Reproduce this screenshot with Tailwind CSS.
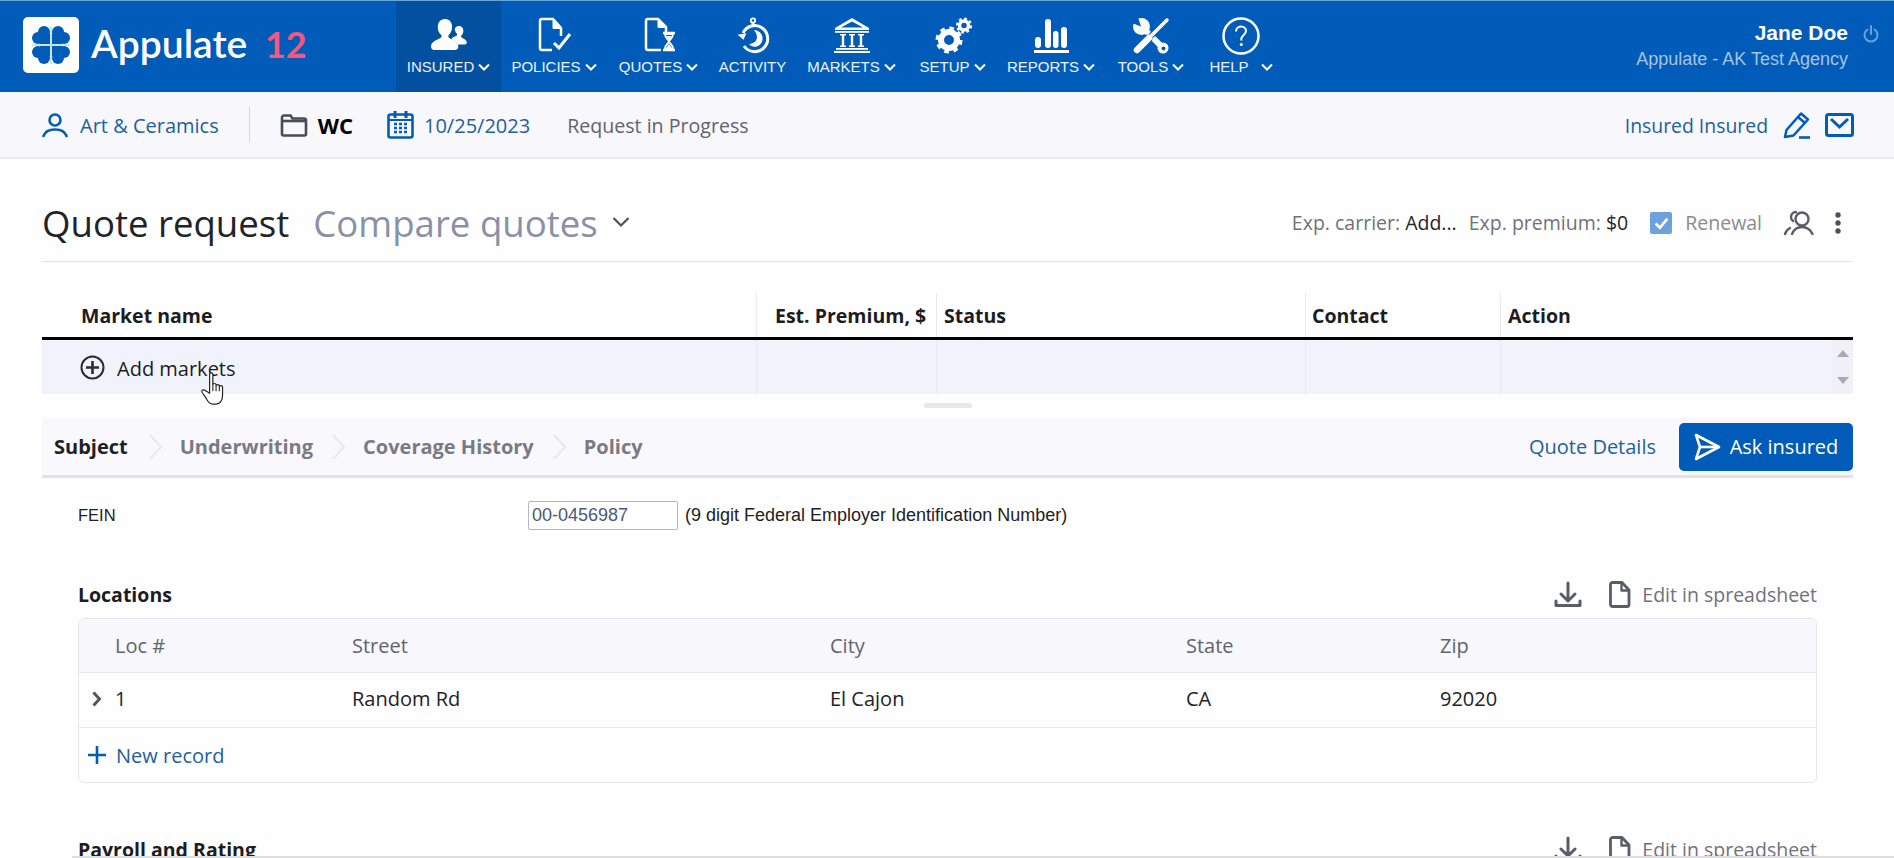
<!DOCTYPE html>
<html><head><meta charset="utf-8"><script src="https://cdn.jsdelivr.net/npm/@tailwindcss/browser@4"></script></head>
<body class="bg-[#fefefe]">
<div class="relative w-[1894px] h-[858px] overflow-hidden flex flex-col font-['Open_Sans',sans-serif] text-[#1f1f24]">

<header class="h-[92px] shrink-0 bg-[#015cb9] border-t border-[#6ba6d8] flex text-white font-['Liberation_Sans',sans-serif]">
  <div class="w-[396px] shrink-0 flex items-center pl-[23px] pb-[3px]">
    <div class="w-[56px] h-[56px] bg-white rounded-[5px] flex items-center justify-center">
      <svg width="40" height="40" viewBox="0 0 40 40" fill="#015cb9"><path d="M19.500 1h1v38h-1zM1 19.500h38v1H1z" fill="#9cc6ec"/><g><circle cx="13" cy="7" r="6"/><circle cx="7" cy="13" r="6"/><rect x="9" y="9" width="10" height="10"/></g><g transform="translate(40 0) scale(-1 1)"><circle cx="13" cy="7" r="6"/><circle cx="7" cy="13" r="6"/><rect x="9" y="9" width="10" height="10"/></g><g transform="translate(0 40) scale(1 -1)"><circle cx="13" cy="7" r="6"/><circle cx="7" cy="13" r="6"/><rect x="9" y="9" width="10" height="10"/></g><g transform="translate(40 40) scale(-1 -1)"><circle cx="13" cy="7" r="6"/><circle cx="7" cy="13" r="6"/><rect x="9" y="9" width="10" height="10"/></g></svg>
    </div>
    <div class="ml-[12px] text-[39px] leading-none font-['Lato',sans-serif] font-semibold -mt-[4px] whitespace-nowrap">Appulate <span class="ml-[8px] text-[36px] text-[#f4577f] font-bold">12</span></div>
  </div>
  <nav class="flex text-[15px] leading-none">
    <div class="w-[105px] bg-[#02509f] flex flex-col items-center pt-[16px]">
      <svg width="38" height="38" viewBox="0 0 38 38" fill="#fff"><path d="M15 2c5 0 7.500 4 7 9-.3 3-1.500 5.500-3.300 7-.8 1.300-.3 2.500 1 3.300 3 1.500 7.300 3 8.300 6.500.8 3-.2 5.200-3 5.200H5c-3 0-4.500-2-3.800-5 1-3.600 6-5.300 9-6.800 1.300-.8 1.800-2 1-3.200C9.400 16.500 8 14 7.800 11 7.400 6 10 2 15 2z"/><path d="M29 9c3 0 4.700 2.500 4.300 5.500-.2 1.800-1 3.300-2 4.300-.5.800-.2 1.500.6 2 1.800 1 4 1.700 4.700 3.700.5 1.800-.2 3-1.800 3H28c-1-2-3-3.500-5-4.500-1.500-.8-1.500-1.800-.2-2.500 1-.5 3-1.200 3.800-1.900.6-.5.700-1.100.3-1.800-1-1-1.800-2.500-2-4.300C24.500 11.500 26 9 29 9z"/></svg>
      <div class="mt-[4px] flex items-center gap-[4px] text-[#eaf2fb]">INSURED<svg width="12" height="8" viewBox="0 0 12 8" fill="none" stroke="#fff" stroke-width="2"><path d="M1 1.500l5 5 5-5"/></svg></div>
    </div>
    <div class="w-[106px] flex flex-col items-center pt-[16px]">
      <svg width="38" height="38" viewBox="0 0 38 38" fill="none" stroke="#fff" stroke-width="2.500"><path d="M17 33H7a2 2 0 0 1-2-2V4a2 2 0 0 1 2-2h11l8 9v8"/><path d="M18 2.500v9h8" fill="#fff" stroke-width="1"/><path d="M19 26l5 5 11-14" stroke-width="3"/></svg>
      <div class="mt-[4px] flex items-center gap-[4px] text-[#eaf2fb]">POLICIES<svg width="12" height="8" viewBox="0 0 12 8" fill="none" stroke="#fff" stroke-width="2"><path d="M1 1.500l5 5 5-5"/></svg></div>
    </div>
    <div class="w-[103px] flex flex-col items-center pt-[16px]">
      <svg width="38" height="38" viewBox="0 0 38 38" fill="none" stroke="#fff" stroke-width="2.500"><path d="M21 33H8a2 2 0 0 1-2-2V4a2 2 0 0 1 2-2h10l8 8v5"/><path d="M18 2.500v8h8" fill="#fff" stroke-width="1"/><path d="M23 16h12M23 33h12" stroke-width="2.500"/><path d="M25 17c0 5 3.500 5 4 7.500-.5 2.500-4 2.500-4 7.500h8c0-5-3.500-5-4-7.500.5-2.500 4-2.500 4-7.500z" stroke-width="1.800"/><path d="M26.500 19h5l-2.500 4zM26 31l3-4 3 4z" fill="#fff" stroke="none"/></svg>
      <div class="mt-[4px] flex items-center gap-[4px] text-[#eaf2fb]">QUOTES<svg width="12" height="8" viewBox="0 0 12 8" fill="none" stroke="#fff" stroke-width="2"><path d="M1 1.500l5 5 5-5"/></svg></div>
    </div>
    <div class="w-[85px] flex flex-col items-center pt-[16px]">
      <svg width="38" height="38" viewBox="0 0 38 38" fill="none" stroke="#fff" stroke-width="2.500"><circle cx="19" cy="3.500" r="2.200" stroke-width="1.800"/><path d="M19 6v4"/><path d="M9 16a13 13 0 1 1 1 13" stroke-width="3"/><path d="M4 17h9l-4 6z" fill="#fff" stroke="none" transform="rotate(-10 8 20)"/><path d="M20 13a8.500 8.500 0 0 1 3 16.500c-4 1-7-1-8-2.500 3 0 8-2 8-7 0-3-1.500-5-3-7z" fill="#fff" stroke="none"/></svg>
      <div class="mt-[4px] text-[#eaf2fb]">ACTIVITY</div>
    </div>
    <div class="w-[113px] flex flex-col items-center pt-[16px]">
      <svg width="38" height="38" viewBox="0 0 38 38" fill="#fff"><path d="M19 1L36 11v2H2v-2zM19 4.500L8 10.500h22z" fill-rule="evenodd"/><rect x="2" y="14" width="34" height="1.800"/><path d="M7 17h6v1.500h-1.800v10H13V30H7v-1.500h1.800v-10H7zM16 17h6v1.500h-1.800v10H22V30h-6v-1.500h1.800v-10H16zM25 17h6v1.500h-1.800v10H31V30h-6v-1.500h1.800v-10H25z"/><rect x="3" y="31" width="32" height="1.800"/><rect x="1" y="34" width="36" height="2"/></svg>
      <div class="mt-[4px] flex items-center gap-[4px] text-[#eaf2fb]">MARKETS<svg width="12" height="8" viewBox="0 0 12 8" fill="none" stroke="#fff" stroke-width="2"><path d="M1 1.500l5 5 5-5"/></svg></div>
    </div>
    <div class="w-[89px] flex flex-col items-center pt-[16px]">
      <svg width="38" height="38" viewBox="0 0 38 38" fill="none" stroke="#fff"><circle cx="15" cy="23" r="8" stroke-width="6"/><circle cx="15" cy="23" r="11.500" stroke-width="4" stroke-dasharray="4.500 4.530"/><circle cx="30" cy="8.500" r="4.500" stroke-width="3.500"/><circle cx="30" cy="8.500" r="6.800" stroke-width="2.500" stroke-dasharray="2.700 2.640"/></svg>
      <div class="mt-[4px] flex items-center gap-[4px] text-[#eaf2fb]">SETUP<svg width="12" height="8" viewBox="0 0 12 8" fill="none" stroke="#fff" stroke-width="2"><path d="M1 1.500l5 5 5-5"/></svg></div>
    </div>
    <div class="w-[108px] flex flex-col items-center pt-[16px]">
      <svg width="38" height="38" viewBox="0 0 38 38" fill="#fff"><rect x="2" y="33" width="35" height="3"/><rect x="3" y="20" width="6" height="11" rx="3"/><rect x="13" y="2" width="6" height="29" rx="3"/><rect x="21" y="14" width="5.500" height="17" rx="2.700"/><rect x="29" y="10" width="6" height="21" rx="3"/></svg>
      <div class="mt-[4px] flex items-center gap-[4px] text-[#eaf2fb]">REPORTS<svg width="12" height="8" viewBox="0 0 12 8" fill="none" stroke="#fff" stroke-width="2"><path d="M1 1.500l5 5 5-5"/></svg></div>
    </div>
    <div class="w-[92px] flex flex-col items-center pt-[16px]">
      <svg width="38" height="38" viewBox="0 0 38 38" fill="none" stroke="#fff" stroke-linecap="round"><circle cx="9.500" cy="9.500" r="8.500" fill="#fff" stroke="none"/><path d="M9 9.500L0 6l6-6z" fill="#015cb9" stroke="none"/><path d="M12 12l18 18" stroke-width="6"/><circle cx="31" cy="31" r="5.500" fill="#fff" stroke="none"/><circle cx="31.500" cy="31.500" r="2" fill="#015cb9" stroke="none"/><path d="M35 3L20 18" stroke="#015cb9" stroke-width="6"/><path d="M35 3L19 19" stroke-width="3.400"/><path d="M16 22L5 33" stroke="#015cb9" stroke-width="9"/><path d="M17 21L5 33" stroke-width="6.500"/></svg>
      <div class="mt-[4px] flex items-center gap-[4px] text-[#eaf2fb]">TOOLS<svg width="12" height="8" viewBox="0 0 12 8" fill="none" stroke="#fff" stroke-width="2"><path d="M1 1.500l5 5 5-5"/></svg></div>
    </div>
    <div class="w-[88px] flex flex-col items-center pt-[16px]">
      <svg width="38" height="38" viewBox="0 0 38 38" fill="none" stroke="#fff" stroke-width="2.500"><circle cx="19" cy="19" r="17.500"/><path d="M14 14.500c0-3 2.200-5 5-5s5 2 5 4.500c0 3.800-4.700 4-4.700 8v1.500" stroke-width="2"/><circle cx="19.300" cy="27.500" r="1.500" fill="#fff" stroke="none"/></svg>
      <div class="mt-[4px] flex items-center gap-[12px] text-[#eaf2fb]">HELP<svg width="12" height="8" viewBox="0 0 12 8" fill="none" stroke="#fff" stroke-width="2"><path d="M1 1.500l5 5 5-5"/></svg></div>
    </div>
  </nav>
  <div class="ml-auto flex pt-[21px] pr-[15px]">
    <div class="flex flex-col items-end">
      <div class="text-[21px] font-bold leading-[22px]">Jane Doe</div>
      <div class="text-[18px] leading-[20px] mt-[5px] text-[#a6c3e3]">Appulate - AK Test Agency</div>
    </div>
    <svg class="ml-[15px] mt-[3px]" width="16" height="18" viewBox="0 0 16 18" fill="none" stroke="#6ba2dc" stroke-width="2" stroke-linecap="round"><path d="M8 1v8M4.500 4.500a6.500 6.500 0 1 0 7 0"/></svg>
  </div>
</header>

<div class="h-[67px] shrink-0 bg-[#f7f7fc] border-b-2 border-[#ebebf1] flex items-center pl-[42px] pr-[40px] text-[20px]">
  <svg width="26" height="26" viewBox="0 0 26 26" fill="none" stroke="#015cb9" stroke-width="2.600" stroke-linecap="round"><circle cx="13" cy="8" r="5.500"/><path d="M1.500 24c1.500-4.500 6-6.500 11.500-6.500s10 2 11.500 6.500"/></svg>
  <span class="ml-[12px] pt-[2px] text-[#22609f]">Art &amp; Ceramics</span>
  <div class="w-px h-[36px] bg-[#d8d8de] ml-[30px]"></div>
  <svg class="ml-[30px]" width="28" height="24" viewBox="0 0 28 24" fill="none"><path d="M2 21V4.500A2 2 0 0 1 4 2.500h6.500l2 3H24a2 2 0 0 1 2 2V21a1.500 1.500 0 0 1-1.500 1.500h-21A1.500 1.500 0 0 1 2 21z" stroke="#4b4b55" stroke-width="2.600"/><path d="M2 8h24" stroke="#4b4b55" stroke-width="2.600"/></svg>
  <span class="ml-[10px] pt-[2px] text-[22px] font-bold text-black">WC</span>
  <svg class="ml-[34px]" width="27" height="29" viewBox="0 0 27 29" fill="none" stroke="#015cb9"><rect x="1.500" y="4.500" width="24" height="23" rx="2" stroke-width="2.600"/><path d="M8 1v7M19 1v7" stroke-width="3"/><path d="M2 10h23" stroke-width="2"/><path d="M7 14h3M12 14h3M17 14h3M7 18h3M12 18h3M17 18h3M7 22h3M12 22h3M17 22h3" stroke-width="2.500"/></svg>
  <span class="ml-[10px] pt-[2px] text-[#22609f]">10/25/2023</span>
  <span class="ml-[37px] pt-[2px] text-[19.600px] text-[#63636e]">Request in Progress</span>
  <span class="ml-auto pt-[2px] text-[19.400px] text-[#22609f]">Insured Insured</span>
  <svg class="ml-[14px]" width="30" height="30" viewBox="0 0 30 30" fill="none" stroke="#015cb9" stroke-width="2.500" stroke-linejoin="round"><path d="M3 27l1.500-7L19 3.500l7 6L11.500 25.500z"/><path d="M16 7l7 6"/><path d="M17 27.500h11" stroke-width="2.600"/></svg>
  <svg class="ml-[13px]" width="29" height="24" viewBox="0 0 29 24" fill="none" stroke="#015cb9" stroke-width="3"><rect x="1.500" y="1.500" width="26" height="21" rx="2"/><path d="M6 6l8.500 8L23 6"/></svg>
</div>

<main class="flex-1 px-[42px] pr-[41px] flex flex-col min-h-0">
  <div class="h-[103px] shrink-0 border-b border-[#e3e3e8] flex items-center pt-[26px]">
    <div class="text-[36.600px] leading-none text-[#222228]">Quote request</div>
    <div class="ml-[24px] text-[36.600px] leading-none text-[#8a90a8]">Compare quotes</div>
    <svg class="ml-[14px] -mt-[2px]" width="18" height="12" viewBox="0 0 18 12" fill="none" stroke="#50505a" stroke-width="2.200"><path d="M1.500 2l7.500 7.500L16.500 2"/></svg>
    <div class="ml-auto flex items-center text-[19.500px] text-[#71717c] pr-[12px]">
      <span>Exp. carrier: <span class="text-[#24242a]">Add...</span></span>
      <span class="ml-[12px]">Exp. premium: <span class="text-[#24242a]">$0</span></span>
      <span class="ml-[22px] w-[22px] h-[22px] rounded-[2px] bg-[#6da1dd] flex items-center justify-center"><svg width="15" height="13" viewBox="0 0 14 12" fill="none" stroke="#fff" stroke-width="2.500"><path d="M1.500 6l4 4 7-8.500"/></svg></span>
      <span class="ml-[13px] text-[#8b8b95]">Renewal</span>
      <svg class="ml-[20px]" width="36" height="26" viewBox="0 0 34 26" fill="none" stroke="#5c5c68" stroke-width="2.400" stroke-linecap="round"><circle cx="19" cy="9" r="6.500"/><path d="M9 24c2-5 6-7 10-7s8 2 10.500 7"/><path d="M13 2c-3 0-5 2.500-5 5 0 1.500.5 3 2 4M2 24c1-3 3-5 5-6"/></svg>
      <svg class="ml-[17px]" width="6" height="22" viewBox="0 0 6 22" fill="#50505a"><circle cx="3" cy="3" r="2.700"/><circle cx="3" cy="11" r="2.700"/><circle cx="3" cy="19" r="2.700"/></svg>
    </div>
  </div>

  <div class="mt-[31px] h-[47px] shrink-0 grid grid-cols-[714px_180px_369px_195px_1fr] border-b-[3px] border-black font-bold text-[19.500px] leading-none">
    <div class="pl-[39px] pt-[13px] text-[#1c1c22]">Market name</div>
    <div class="border-l border-[#e8e8ee] pl-[18px] pt-[13px] text-[#1c1c22] whitespace-nowrap">Est. Premium, $</div>
    <div class="border-l border-[#e8e8ee] pl-[7px] pt-[13px] text-[#1c1c22]">Status</div>
    <div class="border-l border-[#e8e8ee] pl-[6px] pt-[13px] text-[#1c1c22]">Contact</div>
    <div class="border-l border-[#e8e8ee] pl-[7px] pt-[13px] text-[#1c1c22]">Action</div>
  </div>
  <div class="relative h-[54px] shrink-0 bg-[#f1f3fc] grid grid-cols-[714px_180px_369px_195px_1fr]">
    <div class="pl-[38px] flex items-center text-[20px] text-[#1c1c22]">
      <svg width="25" height="25" viewBox="0 0 25 25" fill="none" stroke="#2c2c34"><circle cx="12.500" cy="12.500" r="11" stroke-width="2"/><path d="M12.500 6v13M6 12.500h13" stroke-width="2.600"/></svg>
      <span class="ml-[12px] pt-[3px]">Add markets</span>
    </div>
    <div class="border-l border-[#e6e7f1]"></div>
    <div class="border-l border-[#e6e7f1]"></div>
    <div class="border-l border-[#e6e7f1]"></div>
    <div class="border-l border-[#e6e7f1] flex justify-end">
      <div class="w-[21px] bg-[#f0f0f6] flex flex-col items-center justify-between py-[10px]">
        <div class="w-0 h-0 border-x-[6px] border-x-transparent border-b-[7px] border-b-[#a9a9b3]"></div>
        <div class="w-0 h-0 border-x-[6px] border-x-transparent border-t-[7px] border-t-[#a9a9b3]"></div>
      </div>
    </div>
    <svg class="absolute left-[159px] top-[31px]" width="28" height="36" viewBox="0 0 26 32" fill="#fff" stroke="#222" stroke-width="1.100" stroke-linejoin="round"><path d="M8 2.500c0-2 3-2 3 0v9.500c0-1.500 3-1.500 3 0v1c0-1.500 3-1.500 3 0v1c0-1.500 3-1.500 3 0V22c0 4-2 8-6 8h-3c-3 0-4.500-2-6-5l-4-6c-1-2 1.500-3 3-1.500L8 20z"/><path d="M11 12v6M14 13v5M17 14v4" fill="none" stroke-width="1"/></svg>
  </div>
  <div class="h-[24px] shrink-0 flex justify-center items-center"><div class="w-[48px] h-[5px] bg-[#e6e6ec] rounded-[2px] -mt-[2px]"></div></div>

  <div class="h-[60px] shrink-0 bg-[#f8f8fd] border-b-[3px] border-[#e2e2ec] rounded-t-[4px] flex items-center pl-[12px] text-[20px] font-bold text-[#7a7a84]">
    <span class="text-[#1f1f24]">Subject</span>
    <svg class="ml-[20px]" width="16" height="26" viewBox="0 0 16 26" fill="none" stroke="#e8e8ee" stroke-width="2"><path d="M2 1l11 12L2 25"/></svg>
    <span class="ml-[16px]">Underwriting</span>
    <svg class="ml-[18px]" width="16" height="26" viewBox="0 0 16 26" fill="none" stroke="#e8e8ee" stroke-width="2"><path d="M2 1l11 12L2 25"/></svg>
    <span class="ml-[16px]">Coverage History</span>
    <svg class="ml-[18px]" width="16" height="26" viewBox="0 0 16 26" fill="none" stroke="#e8e8ee" stroke-width="2"><path d="M2 1l11 12L2 25"/></svg>
    <span class="ml-[16px]">Policy</span>
    <span class="ml-auto font-normal text-[#22609f]">Quote Details</span>
    <div class="ml-[23px] w-[174px] h-[48px] bg-[#015cb9] rounded-[5px] flex items-center justify-center gap-[9px] text-white font-normal">
      <svg width="27" height="28" viewBox="0 0 27 28" fill="none" stroke="#fff" stroke-width="2.600" stroke-linejoin="round"><path d="M2 2l23 12L2 26l4-12z"/><path d="M6 14h19"/></svg>
      <span>Ask insured</span>
    </div>
  </div>

  <div class="pt-[22px] h-[52px] shrink-0 flex items-center pl-[36px] font-['Liberation_Sans',sans-serif] text-[18px] text-[#222]">
    <span class="w-[450px] text-[16.500px]">FEIN</span>
    <div class="w-[150px] h-[29px] border border-[#b6b6bd] rounded-[2px] flex items-center pl-[3px] text-[#4a5a78] bg-white">00-0456987</div>
    <span class="ml-[7px]">(9 digit Federal Employer Identification Number)</span>
  </div>

  <div class="mt-[46px] mx-[36px] flex items-center h-[42px] pb-[5px] shrink-0">
    <div class="font-bold text-[19.500px] text-[#1c1c22]">Locations</div>
    <svg class="ml-auto" width="28" height="27" viewBox="0 0 28 27" fill="none" stroke="#5c5c68" stroke-width="3" stroke-linecap="round" stroke-linejoin="round"><path d="M14 2v17M7 13l7 7 7-7M2 20v4.500h24V20"/></svg>
    <svg class="ml-[27px]" width="22" height="27" viewBox="0 0 22 27" fill="none" stroke="#5c5c68" stroke-width="2.800" stroke-linejoin="round"><path d="M3 1.500h10l7 7.500v14.500a2 2 0 0 1-2 2H3.500a2 2 0 0 1-2-2v-20a2 2 0 0 1 1.500-2z"/><path d="M12.500 2v7.500H20" stroke-width="2.400"/></svg>
    <span class="ml-[11px] text-[19.500px] text-[#71717c]">Edit in spreadsheet</span>
  </div>
  <div class="mx-[36px] h-[165px] shrink-0 border border-[#e6e6ee] rounded-[6px] overflow-hidden text-[20px]">
    <div class="h-[54px] bg-[#f7f7fc] border-b border-[#e8e6ee] grid grid-cols-[273px_478px_356px_254px_1fr] items-center text-[#63636e]">
      <span class="pl-[36px]">Loc #</span><span>Street</span><span>City</span><span>State</span><span>Zip</span>
    </div>
    <div class="h-[55px] pb-[2px] border-b border-[#e8e8ee] grid grid-cols-[273px_478px_356px_254px_1fr] items-center text-[#22222a]">
      <span class="relative pl-[36px]"><svg class="absolute left-[12px] top-[7px]" width="12" height="16" viewBox="0 0 12 16" fill="none" stroke="#55555f" stroke-width="3"><path d="M2.500 1.500l6 6.500-6 6.500"/></svg>1</span><span>Random Rd</span><span>El Cajon</span><span>CA</span><span>92020</span>
    </div>
    <div class="h-[54px] pt-[2px] flex items-center pl-[9px] text-[#22609f]">
      <svg class="-mt-[2px]" width="18" height="18" viewBox="0 0 18 18" stroke="#015cb9" stroke-width="2.600"><path d="M9 0v18M0 9h18"/></svg>
      <span class="ml-[10px]">New record</span>
    </div>
  </div>
  <div class="mt-[48px] mx-[36px] flex items-center h-[37px] shrink-0">
    <div class="font-bold text-[19.500px] text-[#1c1c22]">Payroll and Rating</div>
    <svg class="ml-auto" width="28" height="27" viewBox="0 0 28 27" fill="none" stroke="#5c5c68" stroke-width="3" stroke-linecap="round" stroke-linejoin="round"><path d="M14 2v17M7 13l7 7 7-7M2 20v4.500h24V20"/></svg>
    <svg class="ml-[27px]" width="22" height="27" viewBox="0 0 22 27" fill="none" stroke="#5c5c68" stroke-width="2.800" stroke-linejoin="round"><path d="M3 1.500h10l7 7.500v14.500a2 2 0 0 1-2 2H3.500a2 2 0 0 1-2-2v-20a2 2 0 0 1 1.500-2z"/><path d="M12.500 2v7.500H20" stroke-width="2.400"/></svg>
    <span class="ml-[11px] text-[19.500px] text-[#71717c]">Edit in spreadsheet</span>
  </div>
</main>
<div class="absolute left-[72px] right-0 bottom-0 h-[2px] bg-[#dddde2]"></div>
</div>
</body></html>
